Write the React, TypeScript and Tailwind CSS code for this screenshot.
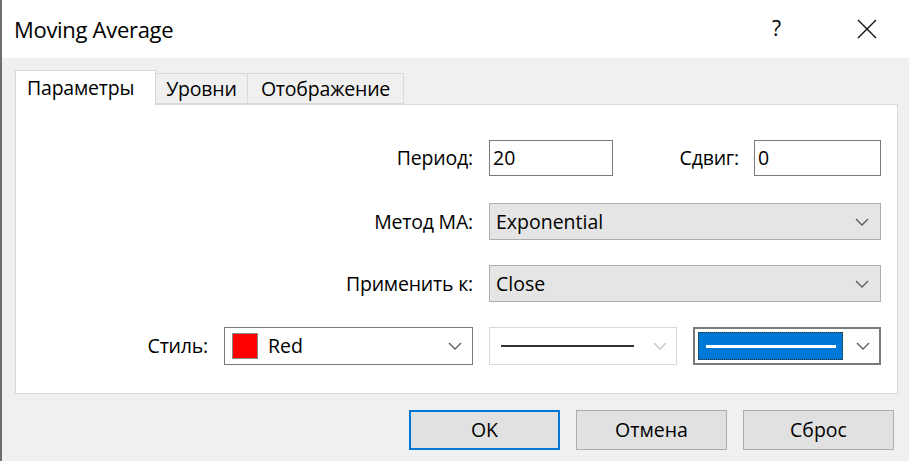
import React from "react";

const font = { fontFamily: '"Open Sans", "Noto Sans", sans-serif' };

function Chevron({ light = false }: { light?: boolean }) {
  return (
    <svg width="14" height="8" viewBox="0 0 14 8" className="shrink-0">
      <path d="M1 1 L7 7 L13 1" fill="none" stroke={light ? "#c4c4c4" : "#5a5a5a"} strokeWidth="1.3" />
    </svg>
  );
}

function Label({ children }: { children: React.ReactNode }) {
  return <span className="text-[19.5px] text-black whitespace-nowrap tracking-[-0.2px]">{children}</span>;
}

function TextField({ value, width }: { value: string; width: string }) {
  return (
    <div className={`${width} h-[36px] border border-[#7a7a7a] bg-white flex items-center pl-[3px] text-[19.5px] text-black`}>
      {value}
    </div>
  );
}

function Combo({ value }: { value: string }) {
  return (
    <div className="w-[392px] h-[37px] ml-[16px] border border-[#adadad] bg-[#e5e5e5] flex items-center justify-between pl-[6px] pr-[11px] text-[19.5px] text-black">
      <span>{value}</span>
      <Chevron />
    </div>
  );
}

export default function App() {
  return (
    <div style={font} className="w-[909px] h-[461px] bg-[#f0f0f0] border-l-2 border-[#6e6e6e] overflow-hidden flex flex-col">
      {/* title bar */}
      <div className="h-[58px] bg-white flex items-center justify-between pl-[12px] pr-[32px]">
        <span className="text-[22px] text-black tracking-[-0.3px]">Moving Average</span>
        <div className="flex items-center">
          <span className="text-[21px] text-black mr-[76px]">?</span>
          <svg width="20" height="20" viewBox="0 0 20 20">
            <path d="M1 1 L19 19 M19 1 L1 19" stroke="#111" strokeWidth="1.4" />
          </svg>
        </div>
      </div>

      {/* tabs */}
      <div className="ml-[13px] mt-[12px] flex items-end relative z-10">
        <div className="w-[141px] h-[35px] bg-white border border-b-0 border-[#d9d9d9] flex items-center pl-[11px] text-[19.5px] tracking-[-0.2px] text-black -mb-px">
          Параметры
        </div>
        <div className="w-[92px] h-[31px] border border-l-0 border-[#d9d9d9] flex items-center justify-center text-[19.5px] tracking-[-0.2px] text-black">
          Уровни
        </div>
        <div className="w-[156px] h-[31px] border border-l-0 border-[#d9d9d9] flex items-center justify-center text-[19.5px] tracking-[-0.2px] text-black">
          Отображение
        </div>
      </div>

      {/* panel */}
      <div className="ml-[13px] w-[883px] h-[290px] bg-white border border-[#d9d9d9] flex flex-col gap-[26px] pt-[35px] pr-[16px]">
        <div className="flex items-center justify-end">
          <Label>Период:</Label>
          <div className="ml-[16px]">
            <TextField value="20" width="w-[124px]" />
          </div>
          <div className="w-[126px] text-right">
            <Label>Сдвиг:</Label>
          </div>
          <div className="ml-[15px]">
            <TextField value="0" width="w-[127px]" />
          </div>
        </div>

        <div className="flex items-center justify-end mt-px">
          <Label>Метод MA:</Label>
          <Combo value="Exponential" />
        </div>

        <div className="flex items-center justify-end -mt-px">
          <Label>Применить к:</Label>
          <Combo value="Close" />
        </div>

        <div className="flex items-center justify-end -mt-px">
          <Label>Стиль:</Label>
          <div className="w-[249px] h-[38px] ml-[16px] border border-[#7a7a7a] bg-white flex items-center pl-[7px] pr-[10px]">
            <div className="w-[26px] h-[26px] bg-[#ff0000] border border-[#8a8a8a] shrink-0" />
            <span className="ml-[10px] text-[19.5px] text-black flex-1">Red</span>
            <Chevron />
          </div>
          <div className="w-[188px] h-[38px] ml-[16px] border border-[#d9d9d9] bg-white flex items-center pl-[11px] pr-[9px]">
            <div className="w-[133px] h-[2px] bg-[#333333]" />
            <div className="flex-1" />
            <Chevron light />
          </div>
          <div className="w-[188px] h-[38px] ml-[16px] border-2 border-[#7a7a7a] bg-white flex items-center pl-[3px] pr-[9px]">
            <div className="w-[145px] h-[28px] bg-[#0078d7] border border-dotted border-[#3a2a10] flex items-center justify-center">
              <div className="w-[130px] h-[3px] bg-white" />
            </div>
            <div className="flex-1" />
            <Chevron />
          </div>
        </div>
      </div>

      {/* buttons */}
      <div className="flex justify-end gap-[16px] pr-[15px] mt-[16px]">
        <button className="w-[151px] h-[40px] bg-[#e1e1e1] border-2 border-[#0078d7] text-[19.5px] text-black">OK</button>
        <button className="w-[151px] h-[40px] bg-[#e1e1e1] border border-[#adadad] text-[19.5px] text-black">Отмена</button>
        <button className="w-[151px] h-[40px] bg-[#e1e1e1] border border-[#adadad] text-[19.5px] text-black">Сброс</button>
      </div>
    </div>
  );
}
